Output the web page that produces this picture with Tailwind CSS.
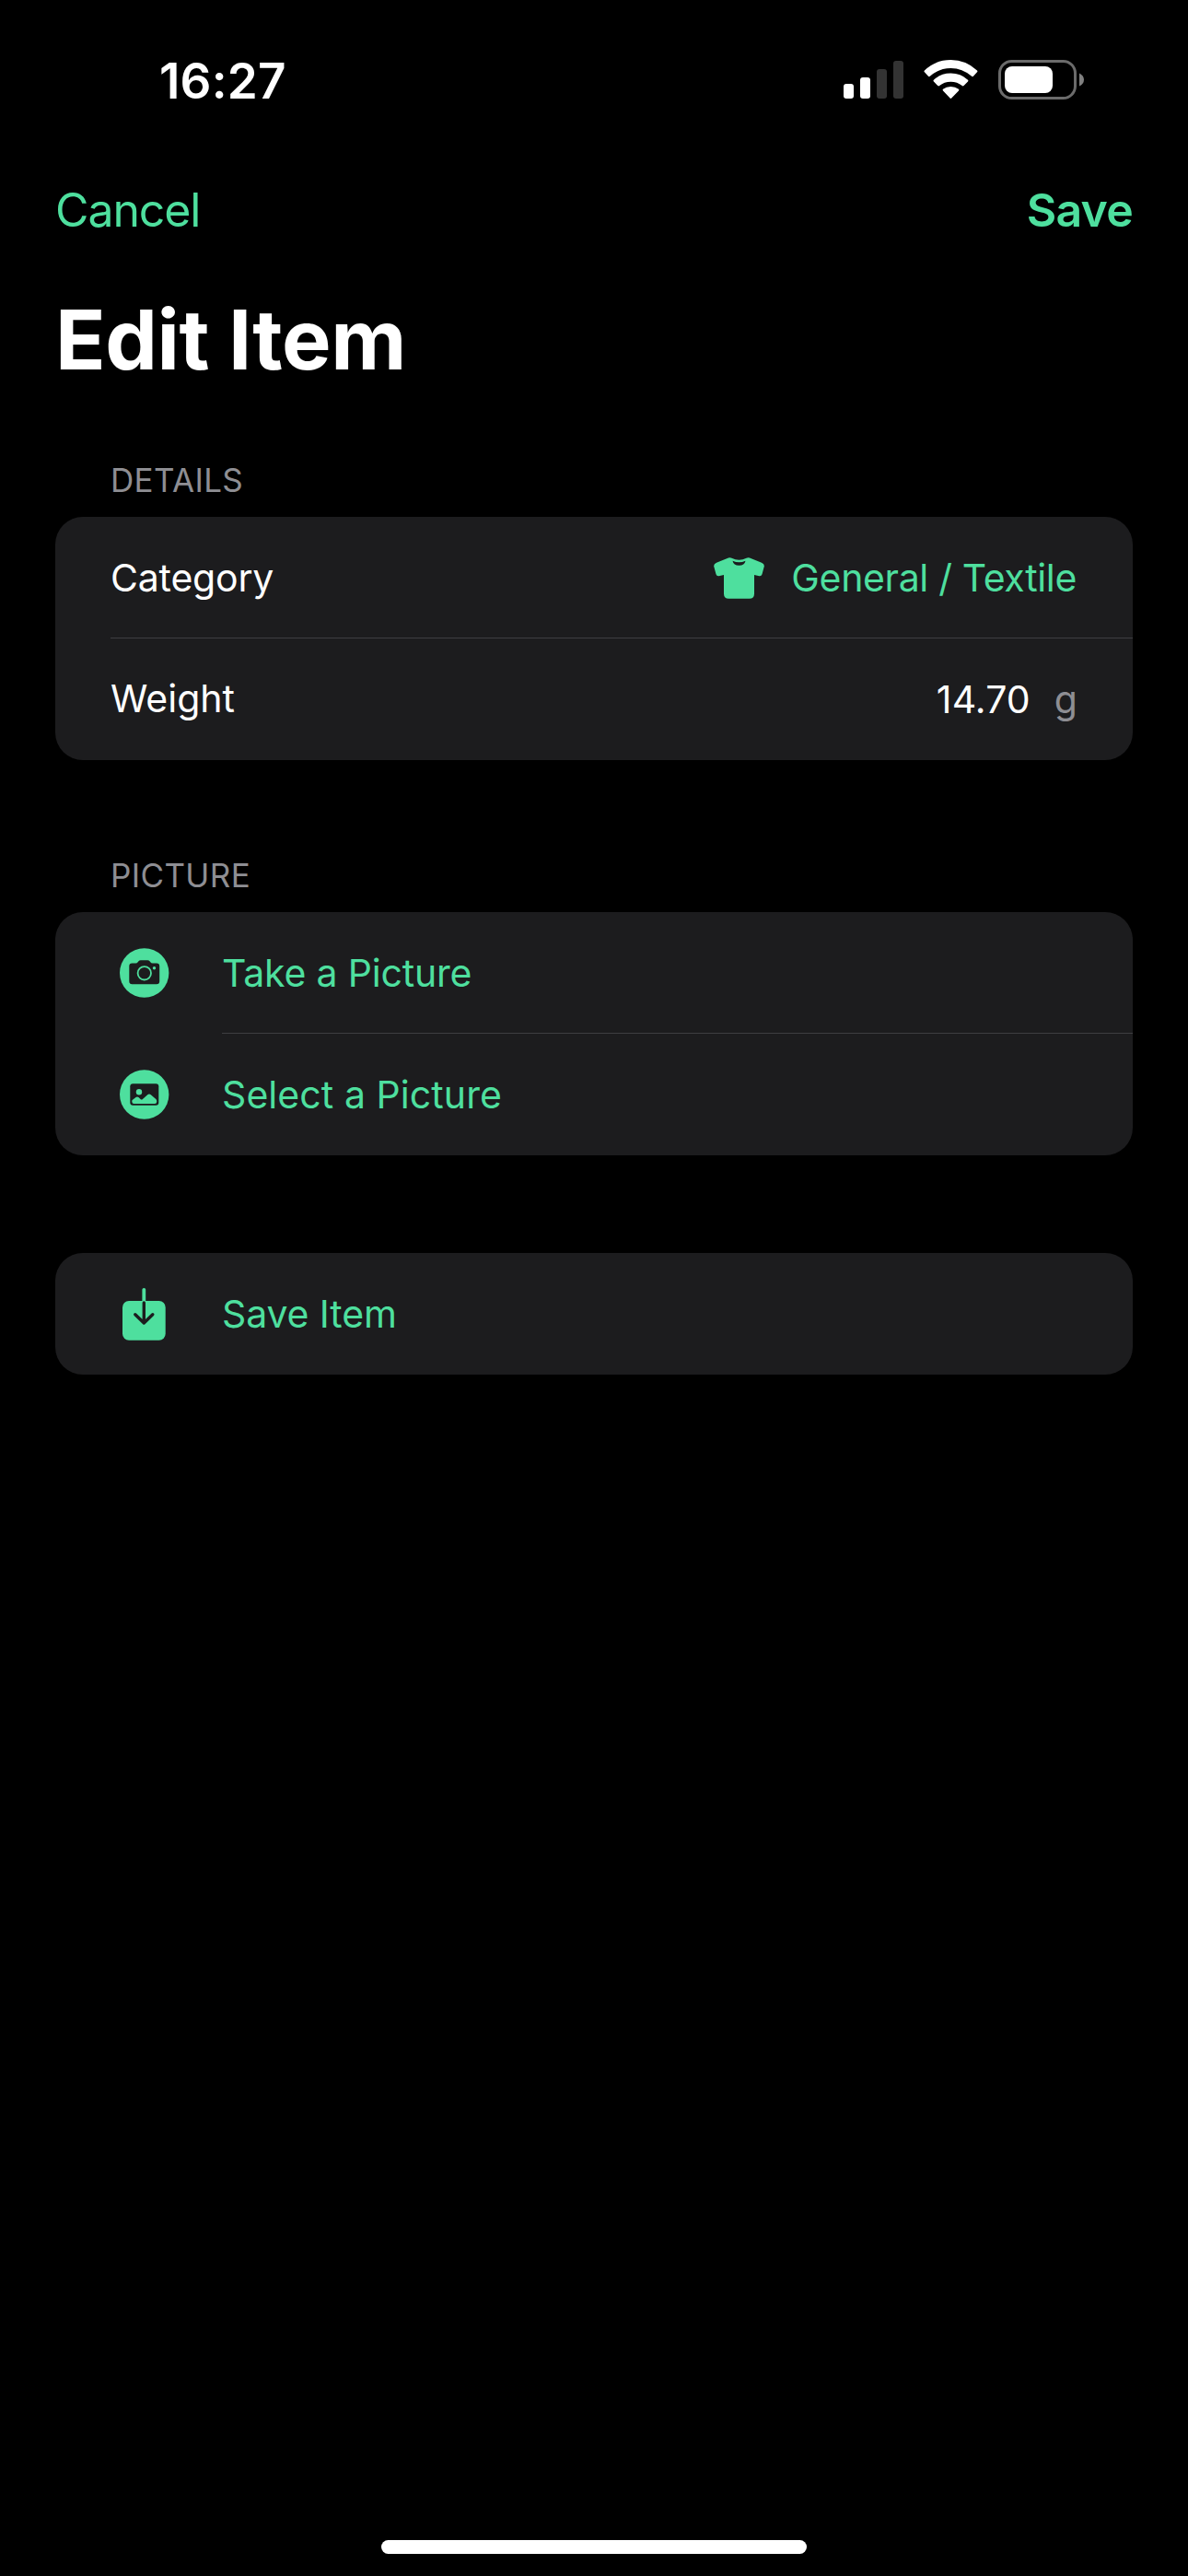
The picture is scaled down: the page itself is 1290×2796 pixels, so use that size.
<!DOCTYPE html>
<html lang="en">
<head>
<meta charset="utf-8">
<title>Edit Item</title>
<script src="https://cdn.jsdelivr.net/npm/@tailwindcss/browser@4"></script>
</head>
<body class="bg-black">
<div class="flex h-[2796px] w-[1290px] flex-col overflow-hidden bg-black font-[Inter,sans-serif] text-[41px] leading-none text-white">

  <!-- Status bar -->
  <div class="flex h-[174px] shrink-0 items-center justify-between pr-[112px] pl-[173px]">
    <span class="pt-[2px] text-[53px] font-semibold tracking-[0.19px]">16:27</span>
    <div class="flex items-center">
      <svg class="h-[44px] w-[66px]" viewBox="0 0 66 44">
        <rect x="0" y="26" width="11" height="16" rx="3" fill="#fff"/>
        <rect x="18" y="19" width="11" height="23" rx="3" fill="#fff"/>
        <rect x="36" y="10" width="11" height="32" rx="3" fill="#333"/>
        <rect x="54" y="1" width="11" height="41" rx="3" fill="#333"/>
      </svg>
      <svg class="ml-[21px] h-[44px] w-[60px]" viewBox="0 0 60 44" fill="#fff">
        <path d="M.9 13.3Q0 12.4.9 11.5Q13 0 29.4 0T58 11.5Q58.800 12.4 58 13.300L53.900 17.800Q53 18.700 52.100 17.800Q42 9 29.400 9T6.800 17.800Q5.900 18.700 5 17.800Z"/>
        <path d="M10.900 23.500Q10 22.600 10.900 21.700Q18.600 14.600 29.400 14.600T48 21.700Q48.800 22.600 48 23.500L43.500 28Q42.600 28.900 41.700 28Q36.500 23.700 29.400 23.700T17.100 28Q16.200 28.900 15.300 28Z"/>
        <path d="M21 33.500Q20.100 32.600 21 31.800Q24.500 29 29.400 29T38 31.800Q38.800 32.600 38 33.500L30.200 41.500Q29.400 42.300 28.600 41.500Z"/>
      </svg>
      <svg class="ml-[21px] h-[44px] w-[94px]" viewBox="0 0 94 44">
        <rect x="1.500" y="1.500" width="82" height="40" rx="13" fill="none" stroke="#6b6b6b" stroke-width="3"/>
        <rect x="7" y="7" width="52" height="29" rx="8" fill="#fff"/>
        <path d="M88 14.500Q93 17 93 21.500T88 28.500Z" fill="#808080"/>
      </svg>
    </div>
  </div>

  <!-- Navigation bar -->
  <div class="flex h-[108px] shrink-0 items-center justify-between px-[60px] text-[50px] text-[#4edf9e]">
    <span class="tracking-[-1.1px]">Cancel</span>
    <span class="font-semibold tracking-[-0.8px]">Save</span>
  </div>

  <h1 class="flex h-[172px] shrink-0 items-center px-[60px] pt-[2px] text-[90px] font-bold tracking-[-0.39px]">Edit Item</h1>

  <main class="flex flex-col px-[60px] pt-[27px]">
    <h2 class="flex h-[80px] items-center pl-[60px] text-[35px] tracking-[0.34px] text-[#8e8e93]">DETAILS</h2>
    <section class="flex flex-col rounded-[30px] bg-[#1c1c1e] pl-[60px]">
      <div class="flex h-[132px] items-center justify-between border-b border-[#3d3d41] pt-[2px] pr-[61px]">
        <span class="tracking-[-0.2px]">Category</span>
        <div class="flex items-center gap-[29px] text-[#4edf9e]">
          <svg class="h-[45px] w-[55px]" viewBox="0 0 55 45" fill="currentColor" fill-rule="evenodd">
            <path d="M16 .5Q17.800-.3 19.500.7Q27.500 4.800 35.500.7Q37.200-.3 39 .5L52 5.800Q55.300 7.300 54.800 9.800L52.500 18.200Q51.800 20.500 49.500 20.200L44 19V39.500Q44 44.800 38.700 44.800H16.300Q11 44.800 11 39.500V19L5.500 20.200Q3.200 20.500 2.500 18.200L.2 9.800Q-.3 7.300 3 5.800ZM20.500 3.800Q21.500 8.800 27.500 8.800T34.500 3.800Q27.500 6.800 20.500 3.800Z"/>
          </svg>
          <span class="tracking-[-0.34px]">General / Textile</span>
        </div>
      </div>
      <div class="flex h-[132px] items-center justify-between pr-[60px]">
        <span class="pb-[2px] tracking-[0px]">Weight</span>
        <div class="flex items-center gap-[26px]">
          <span class="tracking-[0.11px]">14.70</span>
          <span class="text-[#8e8e93]">g</span>
        </div>
      </div>
    </section>

    <h2 class="mt-[85px] flex h-[80px] items-center pl-[60px] text-[35px] tracking-[0.36px] text-[#8e8e93]">PICTURE</h2>
    <section class="flex flex-col rounded-[30px] bg-[#1c1c1e] text-[#4edf9e]">
      <div class="flex h-[132px] items-center pl-[70px]">
        <svg class="h-[54px] w-[54px] shrink-0" viewBox="0 0 54 54">
          <circle cx="26.700" cy="27" r="26.700" fill="#4edf9e"/>
          <path d="M13.500 16.500H17.500Q18.800 16.500 19.700 15.200L20.500 14.200Q21.300 13.200 22.800 13.200H30.200Q31.700 13.200 32.500 14.200L33.300 15.200Q34.200 16.500 35.500 16.500H40Q43.200 16.500 43.200 19.700V36Q43.200 39.200 40 39.200H13.500Q10.300 39.200 10.300 36V19.700Q10.300 16.500 13.500 16.500Z" fill="#1c1c1e"/>
          <circle cx="26.800" cy="27.300" r="7.200" fill="none" stroke="#4edf9e" stroke-width="1.800"/>
          <circle cx="37.500" cy="21.800" r="1.700" fill="#4edf9e"/>
        </svg>
        <span class="ml-[57px] flex h-full grow items-center border-b border-[#3d3d41] pt-[2px] tracking-[-0.19px]">Take a Picture</span>
      </div>
      <div class="flex h-[132px] items-center pl-[70px]">
        <svg class="h-[54px] w-[54px] shrink-0" viewBox="0 0 54 54">
          <circle cx="26.700" cy="27" r="26.700" fill="#4edf9e"/>
          <rect x="11.300" y="15.300" width="31" height="23.400" rx="3" fill="#1c1c1e"/>
          <circle cx="21" cy="24.300" r="3.200" fill="#4edf9e"/>
          <path d="M13.300 34Q13.300 33.300 14 32.700L17.500 30Q19 28.800 20.500 30L22.800 32.200Q23.800 33 24.900 32L30.200 27.200Q32 25.600 33.800 27.200L39.300 32Q40.200 32.800 40.200 34V34.800Q40.200 37 38 37H15.500Q13.300 37 13.300 34.800Z" fill="#4edf9e"/>
        </svg>
        <span class="ml-[57px] tracking-[0.07px]">Select a Picture</span>
      </div>
    </section>

    <section class="mt-[106px] flex h-[132px] items-center rounded-[30px] bg-[#1c1c1e] pl-[70px] text-[#4edf9e]">
      <svg class="h-[58px] w-[54px] shrink-0" viewBox="0 0 54 58" fill="none" stroke-linecap="round" stroke-linejoin="round">
        <rect x="3" y="15" width="46.700" height="42.700" rx="7" fill="#4edf9e"/>
        <path d="M26.300 15V2.800" stroke="#4edf9e" stroke-width="3.800"/>
        <path d="M26.300 17V38.500M16.800 29.800L26.300 39L35.800 29.800" stroke="#1c1c1e" stroke-width="3.400"/>
      </svg>
      <span class="ml-[57px] tracking-[-0.12px]">Save Item</span>
    </section>
  </main>

  <!-- Home indicator -->
  <div class="mx-auto mt-auto mb-[24px] h-[15px] w-[462px] shrink-0 rounded-full bg-white"></div>
</div>
</body>
</html>
